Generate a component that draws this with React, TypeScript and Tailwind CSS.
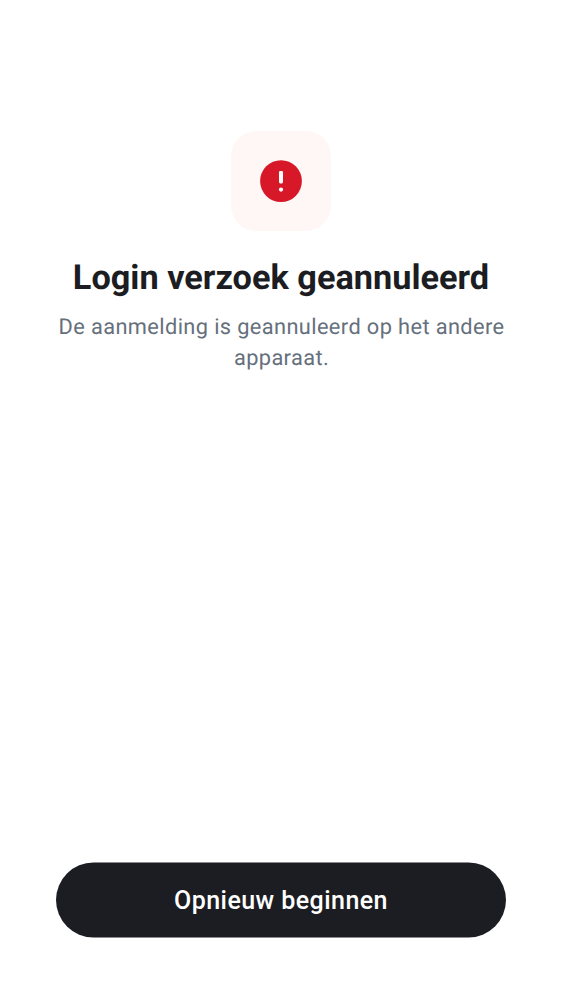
export default function App() {
  return (
    <main className="flex h-[1000px] w-[562px] flex-col items-center bg-white px-14 pt-[131px] pb-[62px] font-['Roboto',sans-serif] [text-rendering:geometricPrecision]">
      <div className="flex size-[100px] shrink-0 items-center justify-center rounded-[25px] bg-[#fff7f5]">
        <svg viewBox="0 0 42 42" className="size-[42px]" aria-hidden="true">
          <circle cx="21" cy="21.1" r="20.9" fill="#d61829" />
          <rect x="19" y="11" width="4" height="12.4" rx="1.3" fill="#fff" />
          <circle cx="21" cy="29.6" r="2.1" fill="#fff" />
        </svg>
      </div>
      <h1 className="mt-[25px] text-center text-[34.3px] leading-[44px] font-bold whitespace-nowrap text-[#1c1d22]">
        Login verzoek geannuleerd
      </h1>
      <p className="mt-3 w-full pl-px text-center text-[21.8px] leading-[31px] tracking-[0.38px] text-[#66707c]">
        De aanmelding is geannuleerd op het andere apparaat.
      </p>
      <button className="mt-auto h-[75px] w-full translate-y-[-0.5px] rounded-full bg-[#1c1d22] text-[25px] font-medium tracking-[0.45px] text-white">
        Opnieuw beginnen
      </button>
    </main>
  );
}
